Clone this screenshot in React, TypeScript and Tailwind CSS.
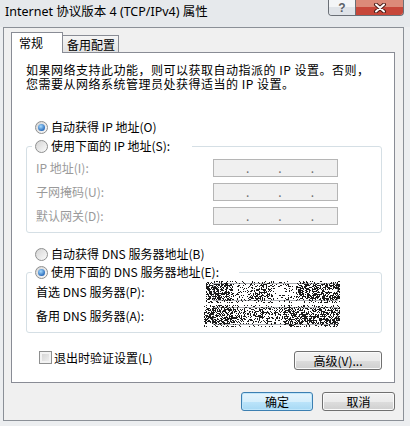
import React from 'react'

const body = "font-['Noto_Sans_CJK_SC','Noto_Sans',sans-serif]"

// scrambled (pixelated) address fields, seeded so the picture is stable
function noisePath(seed: number, w: number, h: number, blobs: [number, number, number][]) {
  let s = seed
  const rnd = () => {
    s = (s * 1103515245 + 12345) & 0x7fffffff
    return s / 0x7fffffff
  }
  let d = ''
  for (let y = 0; y < h; y++) {
    for (let x = 0; x < w; x++) {
      let p = 0.06
      for (const [a, b, q] of blobs) if (x >= a && x < b) p = q
      if (y < 3 || y >= h - 3) p *= 0.5
      if (rnd() < p) d += `M${x} ${y}h1v1h-1z`
    }
  }
  return d
}

const noiseA = noisePath(7, 134, 22, [
  [0, 28, 0.55],
  [30, 44, 0.2],
  [44, 68, 0.42],
  [70, 88, 0.15],
  [90, 134, 0.55],
])
const noiseB = noisePath(31, 136, 22, [
  [0, 30, 0.55],
  [30, 80, 0.33],
  [80, 136, 0.55],
])

function Radio({ checked }: { checked?: boolean }) {
  return (
    <span className="flex h-[13px] w-[13px] shrink-0 items-center justify-center rounded-full border border-[#8e8f8f] bg-[linear-gradient(135deg,#d4d4d4,#fbfbfb)]">
      {checked && (
        <span className="h-[7px] w-[7px] rounded-full bg-[radial-gradient(circle_at_40%_35%,#a6dbff,#2467b8_75%)]" />
      )}
    </span>
  )
}

function IpBox() {
  return (
    <div className="flex h-[18px] w-[125px] items-center gap-[29px] border border-[#b5b5b5] bg-[#f0f0f0] pl-[32px] text-[12px] leading-[12px] text-[#6d6d6d]">
      <span>.</span>
      <span>.</span>
      <span>.</span>
    </div>
  )
}

function WinButton({ children, primary, w }: { children: React.ReactNode; primary?: boolean; w: string }) {
  return (
    <button
      className={
        primary
          ? `${w} h-[19px] rounded-[3px] border border-[#3c7fb1] bg-[linear-gradient(#e5f4fc_0%,#d6effc_50%,#bce4fa_51%,#a6d9f4_100%)] text-[12px] leading-[17px] text-black shadow-[inset_0_0_0_1px_#bfe6fb]`
          : `${w} h-[19px] rounded-[3px] border border-[#707070] bg-[linear-gradient(#f2f2f2_0%,#ebebeb_50%,#dddddd_51%,#cfcfcf_100%)] text-[12px] leading-[17px] text-black shadow-[inset_0_0_0_1px_#fafafa]`
      }
    >
      {children}
    </button>
  )
}

export default function App() {
  return (
    <div className={`flex h-[426px] w-[410px] flex-col overflow-hidden bg-[#eceef0] ${body}`}>
      {/* caption */}
      <div className="flex h-[27px] items-start justify-between bg-[#e6e9ec]">
        <div className="pl-[5px] pt-[3px] font-['Noto_Sans','Noto_Sans_CJK_SC',sans-serif] text-[12.5px] leading-[18px] text-black">
          Internet 协议版本 4 (TCP/IPv4) 属性
        </div>
        <div className="mr-[6px] flex h-[16px] overflow-hidden rounded-b-[4px] border border-t-0 border-[#6a6f76]">
          <div className="flex h-[15px] w-[27px] flex-col border-r border-[#6a6f76]">
            <div className="relative flex h-full w-full items-center justify-center bg-[#dfe3e8]">
              <div className="absolute inset-x-0 top-0 h-[7px] bg-[#f3f5f7]" />
              <span className="relative font-['Liberation_Sans',sans-serif] text-[12px] font-bold leading-[12px] text-[#5b6068]">?</span>
            </div>
          </div>
          <div className="relative flex h-[15px] w-[47px] items-center justify-center bg-[#c7473a]">
            <div className="absolute inset-x-0 top-0 h-[7px] bg-[#dc8a79]" />
            <svg className="relative" width="14" height="10" viewBox="0 0 14 10">
              <path d="M3 1.5 L11 8.5 M11 1.5 L3 8.5" stroke="#4a1d18" strokeWidth="4" strokeLinecap="round" />
              <path d="M3 1.5 L11 8.5 M11 1.5 L3 8.5" stroke="#ffffff" strokeWidth="2" strokeLinecap="round" />
            </svg>
          </div>
        </div>
      </div>

      {/* client area */}
      <div className="ml-[3px] flex h-[394px] w-[401px] flex-col border border-[#8b9097] bg-[#f0f0f0] pl-[7px] pr-[8px] pt-[4px]">
        {/* tabs */}
        <div className="flex items-end text-[12px] text-black">
          <div className="relative z-10 -mb-px flex h-[21px] w-[52px] items-center border border-b-0 border-[#898c95] bg-white pl-[7px] leading-[14px]">
            常规
          </div>
          <div className="flex h-[17px] w-[56px] items-center border-r border-t border-[#898c95] bg-[linear-gradient(#f5f5f5,#e3e3e3)] pl-[4px] pt-[1px] leading-[14px]">
            备用配置
          </div>
        </div>

        {/* panel */}
        <div className="flex h-[331px] w-[384px] flex-col border border-[#898c95] bg-white pl-[14px] pr-[12px] pt-[10px] text-[12px] leading-[14px] text-black">
          <div className="flex flex-col">
            <span className="tracking-[0.5px]">如果网络支持此功能，则可以获取自动指派的 IP 设置。否则，</span>
            <span className="tracking-[0.5px]">您需要从网络系统管理员处获得适当的 IP 设置。</span>
          </div>

          <div className="ml-[9px] mt-[29px] flex h-[14px] items-center gap-[3px]">
            <Radio checked />
            <span>自动获得 IP 地址(O)</span>
          </div>

          <fieldset className="mt-[5px] w-[356px] rounded-[3px] border border-[#d5dfe5] pb-[7px] pl-[5px] pt-[6px]">
            <legend className="pl-[3px] pr-[22px]">
              <span className="flex h-[14px] items-center gap-[3px]">
                <Radio />
                <span>使用下面的 IP 地址(S):</span>
              </span>
            </legend>
            <div className="flex flex-col gap-[6px] text-[#9a9a9a]">
              {['IP 地址(I):', '子网掩码(U):', '默认网关(D):'].map((l) => (
                <div key={l} className="ml-[4px] flex h-[18px] items-center">
                  <span className="w-[177px]">{l}</span>
                  <IpBox />
                </div>
              ))}
            </div>
          </fieldset>

          <div className="ml-[9px] mt-[14px] flex h-[14px] items-center gap-[3px]">
            <Radio />
            <span>自动获得 DNS 服务器地址(B)</span>
          </div>

          <fieldset className="mt-[4px] w-[356px] rounded-[3px] border border-[#d5dfe5] pb-[7px] pl-[5px] pt-[4px]">
            <legend className="pl-[3px] pr-[20px]">
              <span className="flex h-[14px] items-center gap-[3px]">
                <Radio checked />
                <span>使用下面的 DNS 服务器地址(E):</span>
              </span>
            </legend>
            <div className="flex flex-col gap-[6px]">
              <div className="ml-[4px] flex h-[18px] items-center">
                <span className="w-[177px]">首选 DNS 服务器(P):</span>
                <div className="relative h-[18px] w-[125px] border border-[#abadb3] bg-white">
                  <svg className="absolute left-[-8px] top-[-3px]" width="134" height="22">
                    <path d={noiseA} fill="#1a1a1a" />
                  </svg>
                </div>
              </div>
              <div className="ml-[4px] flex h-[18px] items-center">
                <span className="w-[177px]">备用 DNS 服务器(A):</span>
                <div className="relative h-[18px] w-[125px] border border-[#abadb3] bg-white">
                  <svg className="absolute left-[-10px] top-[-3px]" width="136" height="22">
                    <path d={noiseB} fill="#1a1a1a" />
                  </svg>
                </div>
              </div>
            </div>
          </fieldset>

          <div className="mt-[18px] flex items-start justify-between">
            <div className="ml-[13px] flex h-[13px] items-center gap-[2px]">
              <span className="h-[13px] w-[13px] border border-[#8e8f8f] bg-[linear-gradient(135deg,#cfcfcf,#f4f4f4)] shadow-[inset_0_0_0_2px_#f3f3f3]" />
              <span>退出时验证设置(L)</span>
            </div>
            <WinButton w="w-[88px]">高级(V)...</WinButton>
          </div>
        </div>

        {/* dialog buttons */}
        <div className="mt-[9px] flex justify-end gap-[9px]">
          <WinButton primary w="w-[72px]">
            确定
          </WinButton>
          <WinButton w="w-[73px]">取消</WinButton>
        </div>
      </div>
    </div>
  )
}
